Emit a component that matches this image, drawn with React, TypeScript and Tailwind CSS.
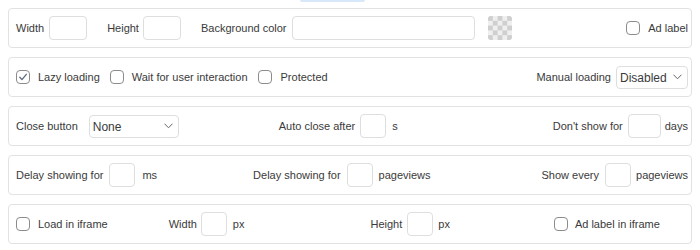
import React from "react";

function Box({ w }: { w: string }) {
  return <div className={`${w} h-6 shrink-0 rounded-[4px] border border-[#dedede] bg-white`} />;
}

function Check({ checked = false }: { checked?: boolean }) {
  return (
    <span className="flex h-[14px] w-[14px] shrink-0 items-center justify-center rounded-[4px] border border-[#8c8c8c] bg-white">
      {checked && (
        <svg width="10" height="10" viewBox="0 0 10 10" fill="none">
          <path d="M1.8 5.2 L4 7.6 L8.3 2.3" stroke="#5b6b7c" strokeWidth="1.3" strokeLinecap="round" strokeLinejoin="round" />
        </svg>
      )}
    </span>
  );
}

function Chevron() {
  return (
    <svg width="9" height="6" viewBox="0 0 9 6" fill="none">
      <path d="M0.8 1 L4.5 4.8 L8.2 1" stroke="#666" strokeWidth="1" strokeLinecap="round" strokeLinejoin="round" />
    </svg>
  );
}

function Select({ value, w }: { value: string; w: string }) {
  return (
    <div className={`${w} flex h-[23px] shrink-0 items-center justify-between rounded-[4px] border border-[#dedede] bg-white pl-[3px] pr-[5px] text-[12px] text-[#3a3a3a]`}>
      <span className="pt-[1px]">{value}</span>
      <Chevron />
    </div>
  );
}

function Swatch() {
  const cells = [];
  for (let r = 0; r < 5; r++) {
    for (let c = 0; c < 5; c++) {
      if ((r + c) % 2 === 0) cells.push(<rect key={`${r}-${c}`} x={c * 4.8} y={r * 4.8} width="4.8" height="4.8" fill="#cfcfcf" />);
    }
  }
  return (
    <svg width="24" height="24" viewBox="0 0 24 24" className="shrink-0 rounded-[3px]">
      <rect width="24" height="24" fill="#efefef" />
      {cells}
    </svg>
  );
}

function Card({ children }: { children: React.ReactNode }) {
  return (
    <div className="flex h-10 items-center rounded-[4px] border border-[#e2e2e2] bg-white pl-[7px] pr-[3px]">
      {children}
    </div>
  );
}

export default function App() {
  return (
    <div className="h-[250px] w-[700px] bg-white font-['Liberation_Sans',Arial,sans-serif] text-[11px] text-[#3a3a3a]">
      <div className="ml-[300px] h-[2px] w-[65px] rounded-b-[3px] bg-[#d7e8fb]" />
      <div className="mx-2 mt-[6px] flex flex-col gap-[9px]">
        <Card>
          <span>Width</span>
          <span className="ml-[5px]"><Box w="w-[38px]" /></span>
          <span className="ml-5">Height</span>
          <span className="ml-[4px]"><Box w="w-[38px]" /></span>
          <span className="ml-5">Background color</span>
          <span className="ml-[5px]"><Box w="w-[183px]" /></span>
          <span className="ml-[13px]"><Swatch /></span>
          <label className="ml-auto flex items-center gap-2">
            <Check />
            <span>Ad label</span>
          </label>
        </Card>

        <Card>
          <label className="flex items-center gap-2">
            <Check checked />
            <span>Lazy loading</span>
          </label>
          <label className="ml-[10px] flex items-center gap-2">
            <Check />
            <span>Wait for user interaction</span>
          </label>
          <label className="ml-[10px] flex items-center gap-[9px]">
            <Check />
            <span>Protected</span>
          </label>
          <div className="ml-auto flex items-center gap-[5px]">
            <span>Manual loading</span>
            <Select value="Disabled" w="w-[72px]" />
          </div>
        </Card>

        <Card>
          <span>Close button</span>
          <span className="ml-[11px]"><Select value="None" w="w-[90px]" /></span>
          <div className="ml-[100px] flex items-center">
            <span>Auto close after</span>
            <span className="ml-[5px]"><Box w="w-[26px]" /></span>
            <span className="ml-[6px]">s</span>
          </div>
          <div className="ml-auto flex items-center">
            <span>Don't show for</span>
            <span className="ml-[5px]"><Box w="w-[33px]" /></span>
            <span className="ml-[4px]">days</span>
          </div>
        </Card>

        <Card>
          <span>Delay showing for</span>
          <span className="ml-[6px]"><Box w="w-[26px]" /></span>
          <span className="ml-[7px]">ms</span>
          <div className="ml-[96px] flex items-center">
            <span>Delay showing for</span>
            <span className="ml-[6px]"><Box w="w-[26px]" /></span>
            <span className="ml-[6px]">pageviews</span>
          </div>
          <div className="ml-auto flex items-center">
            <span>Show every</span>
            <span className="ml-[6px]"><Box w="w-[26px]" /></span>
            <span className="ml-[5px]">pageviews</span>
          </div>
        </Card>

        <Card>
          <label className="flex items-center gap-2">
            <Check />
            <span>Load in iframe</span>
          </label>
          <span className="ml-[61px]">Width</span>
          <span className="ml-[4px]"><Box w="w-[26px]" /></span>
          <span className="ml-[6px]">px</span>
          <span className="ml-[126px]">Height</span>
          <span className="ml-[5px]"><Box w="w-[26px]" /></span>
          <span className="ml-[5px]">px</span>
          <label className="ml-[104px] flex items-center gap-[7px]">
            <Check />
            <span>Ad label in iframe</span>
          </label>
        </Card>
      </div>
    </div>
  );
}
